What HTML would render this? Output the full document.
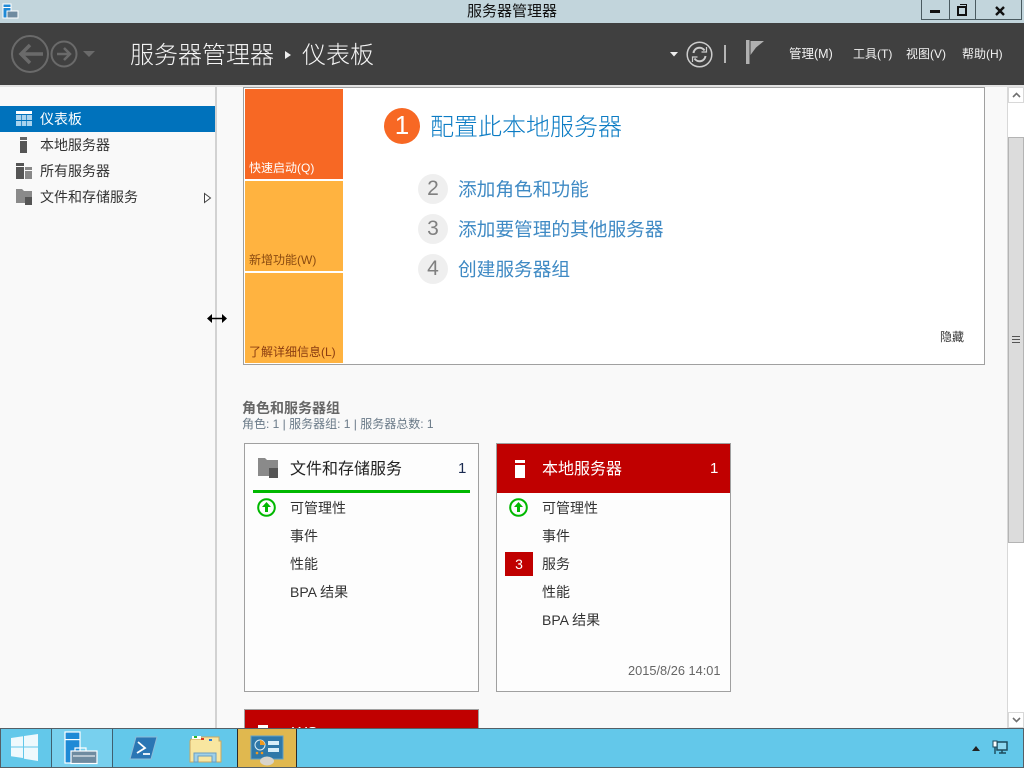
<!DOCTYPE html>
<html lang="zh"><head><meta charset="utf-8"><title>服务器管理器</title>
<style>
html,body{margin:0;padding:0;width:1024px;height:768px;overflow:hidden;background:#f9f9f9}
body{position:relative;font-family:"Liberation Sans","Noto Sans CJK SC",sans-serif;font-size:14px;color:#333}
.a,.t{position:absolute}
.t{white-space:nowrap;line-height:1}
svg{position:absolute;overflow:visible}
.c{position:absolute;background:#fdfdfd;border:1px solid #a0a0a0;box-sizing:border-box}
.num{position:absolute;width:30px;height:30px;border-radius:50%;background:#efefef;color:#808080;font-size:21px;line-height:30px;text-align:center;font-weight:300}
.lnk{color:#3f8ac4;font-size:18.7px}
.tile{position:absolute;left:245px;width:98px;height:90px}
.tile span{position:absolute;left:4px;bottom:3px;font-size:12px;line-height:16px;white-space:nowrap}
.m{font-size:12px;color:#f2f2f2;top:48px}
</style></head><body>
<!-- title bar -->
<div class="a" style="left:0;top:0;width:1024px;height:23px;background:#c2d5dc"></div>
<svg style="left:2px;top:3px" width="17" height="16" viewBox="0 0 17 16"><rect x="1" y="1" width="8" height="14" fill="#1f8ad6" stroke="#fff"/><rect x="1" y="4" width="8" height="1" fill="#fff"/><rect x="5" y="8" width="11" height="7" fill="#6f8ba0" stroke="#fff"/></svg>
<div class="t" style="left:467px;top:4px;font-size:15px;color:#111">服务器管理器</div>
<div class="a" style="left:921px;top:0;height:20px;box-sizing:border-box;border:1px solid #4a5a60;border-top:0;width:101px"></div>
<div class="a" style="left:949px;top:0;width:1px;height:19px;background:#4a5a60"></div>
<div class="a" style="left:975px;top:0;width:1px;height:19px;background:#4a5a60"></div>
<div class="a" style="left:930px;top:10px;width:10px;height:3px;background:#111"></div>
<div class="a" style="left:957px;top:6px;width:6px;height:6px;border:2px solid #111"></div>
<div class="a" style="left:960px;top:4px;width:6px;height:1px;background:#111"></div>
<div class="a" style="left:966px;top:4px;width:1px;height:7px;background:#111"></div>
<svg style="left:994px;top:5px" width="12" height="12" viewBox="0 0 12 12"><path d="M2 2L10 10M10 2L2 10" stroke="#111" stroke-width="2.4"/></svg>
<!-- header -->
<div class="a" style="left:0;top:23px;width:1024px;height:62px;background:#404040"></div>
<svg style="left:10px;top:34px" width="85" height="40" viewBox="0 0 85 40" fill="none" stroke="#6a6a6a"><circle cx="20" cy="20" r="18" stroke-width="2"/><path d="M33 20H11M20 11L11 20L20 29" stroke-width="3.5"/><circle cx="54" cy="20" r="12.5" stroke-width="2"/><path d="M47 20H60M54 14L60 20L54 26" stroke-width="2.5"/><path d="M73 17H85L79 23Z" fill="#6a6a6a" stroke="none"/></svg>
<div class="t" style="left:130px;top:44px;font-size:24px;color:#f4f4f4;font-weight:300">服务器管理器</div>
<svg style="left:285px;top:50px" width="6" height="10"><path d="M0 1L6 5L0 9Z" fill="#eee"/></svg>
<div class="t" style="left:302px;top:44px;font-size:24px;color:#f4f4f4;font-weight:300">仪表板</div>
<svg style="left:670px;top:52px" width="8" height="5"><path d="M0 0H8L4 4.5Z" fill="#eee"/></svg>
<svg style="left:686px;top:41px" width="27" height="27" viewBox="0 0 27 27" fill="none" stroke="#ccc"><circle cx="13.5" cy="13.5" r="12.3" stroke-width="1.5"/><path d="M7.5 12a6 6 0 0 1 11-2.5M19.5 15a6 6 0 0 1-11 2.5" stroke-width="2"/><path d="M20.5 6v5h-5M6.5 21v-5h5" stroke-width="1.2"/></svg>
<div class="a" style="left:724px;top:45px;width:2px;height:18px;background:#b5b5b5"></div>
<svg style="left:746px;top:40px" width="19" height="24" viewBox="0 0 19 24"><rect x="0" y="0" width="3.5" height="24" fill="#b0b0b0"/><path d="M4.5 1H18L10 7.5L4.5 15Z" fill="#b0b0b0"/></svg>
<div class="t m" style="left:789px;font-size:12.5px">管理(M)</div>
<div class="t m" style="left:853px">工具(T)</div>
<div class="t m" style="left:906px">视图(V)</div>
<div class="t m" style="left:962px">帮助(H)</div>
<!-- sidebar -->
<div class="a" style="left:0;top:85px;width:1024px;height:2px;background:#e2e2e2"></div>
<div class="a" style="left:215px;top:87px;width:2px;height:641px;background:#d2d2d2"></div>
<div class="a" style="left:0;top:106px;width:215px;height:26px;background:#0072bc"></div>
<svg style="left:16px;top:111px" width="16" height="15" viewBox="0 0 16 15"><rect width="16" height="3" fill="#fff"/><g fill="#a9d3ee"><rect y="4" width="5" height="5"/><rect x="5.7" y="4" width="4.6" height="5"/><rect x="11" y="4" width="5" height="5"/><rect y="10" width="5" height="5"/><rect x="5.7" y="10" width="4.6" height="5"/><rect x="11" y="10" width="5" height="5"/></g></svg>
<div class="t" style="left:40px;top:112px;color:#fff">仪表板</div>
<svg style="left:20px;top:137px" width="7" height="16"><rect width="7" height="3" fill="#666"/><rect y="4" width="7" height="12" fill="#555"/></svg>
<div class="t" style="left:40px;top:138px">本地服务器</div>
<svg style="left:16px;top:163px" width="16" height="16"><rect width="8" height="3" fill="#555"/><rect y="4" width="8" height="12" fill="#555"/><rect x="9" y="4" width="7" height="3" fill="#888"/><rect x="9" y="8" width="7" height="8" fill="#888"/></svg>
<div class="t" style="left:40px;top:164px">所有服务器</div>
<svg style="left:16px;top:189px" width="16" height="16"><path d="M0 0H6L8 2H16V8H9V14H0Z" fill="#8a8a8a"/><rect x="9" y="8" width="7" height="8" fill="#555"/></svg>
<div class="t" style="left:40px;top:190px">文件和存储服务</div>
<svg style="left:204px;top:193px" width="7" height="10"><path d="M.5.5L6.5 5L.5 9.5Z" fill="#fff" stroke="#444"/></svg>
<svg style="left:207px;top:313px" width="20" height="11" viewBox="0 0 20 11"><path d="M2 5.5H18" stroke="#000" stroke-width="1.5"/><path d="M0 5.5L5 1V10ZM20 5.5L15 1V10Z" fill="#000"/></svg>
<!-- quick start -->
<div class="a" style="left:243px;top:87px;width:742px;height:278px;box-sizing:border-box;background:#fff;border:1px solid #a0a0a0"></div>
<div class="tile" style="top:89px;background:#f76824;color:#fff"><span>快速启动(Q)</span></div>
<div class="tile" style="top:181px;background:#ffb340;color:#8a4a10"><span>新增功能(W)</span></div>
<div class="tile" style="top:273px;background:#ffb340;color:#8a3c10"><span>了解详细信息(L)</span></div>
<div class="a" style="left:384px;top:108px;width:36px;height:36px;border-radius:50%;background:#f76824;color:#fff;font-size:26px;line-height:35px;text-align:center;font-weight:300">1</div>
<div class="t" style="left:430px;top:116px;font-size:24px;color:#0c7cc4;font-weight:300">配置此本地服务器</div>
<div class="num" style="left:418px;top:174px">2</div>
<div class="t lnk" style="left:458px;top:181px">添加角色和功能</div>
<div class="num" style="left:418px;top:214px">3</div>
<div class="t lnk" style="left:458px;top:221px">添加要管理的其他服务器</div>
<div class="num" style="left:418px;top:254px">4</div>
<div class="t lnk" style="left:458px;top:261px">创建服务器组</div>
<div class="t" style="left:940px;top:331px;font-size:12px;color:#333">隐藏</div>
<!-- roles -->
<div class="t" style="left:242px;top:401px;font-size:14px;font-weight:bold;color:#666">角色和服务器组</div>
<div class="t" style="left:242px;top:418px;font-size:12px;color:#6a7a88">角色: 1 | 服务器组: 1 | 服务器总数: 1</div>
<!-- card 1 -->
<div class="c" style="left:244px;top:443px;width:235px;height:249px"></div>
<svg style="left:258px;top:458px" width="20" height="20"><path d="M0 0H7L9 2H20V10H11V18H0Z" fill="#8a8a8a"/><rect x="11" y="10" width="9" height="10" fill="#555"/></svg>
<div class="t" style="left:290px;top:462px;font-size:16px;color:#222">文件和存储服务</div>
<div class="t" style="left:458px;top:461px;font-size:15px;color:#1a2a50">1</div>
<div class="a" style="left:253px;top:490px;width:217px;height:3px;background:#00b800"></div>
<svg style="left:257px;top:498px" width="19" height="19" viewBox="0 0 19 19"><circle cx="9.5" cy="9.5" r="8.3" fill="none" stroke="#00b800" stroke-width="2"/><path d="M9.5 4L14 9H11V14H8V9H5Z" fill="#00b800"/></svg>
<div class="t" style="left:290px;top:501px">可管理性</div>
<div class="t" style="left:290px;top:529px">事件</div>
<div class="t" style="left:290px;top:557px">性能</div>
<div class="t" style="left:290px;top:585px">BPA 结果</div>
<!-- card 2 -->
<div class="c" style="left:496px;top:443px;width:235px;height:249px"></div>
<div class="a" style="left:497px;top:444px;width:233px;height:49px;background:#c00000"></div>
<svg style="left:515px;top:460px" width="10" height="18"><rect width="10" height="3" fill="#fff"/><rect y="5" width="10" height="13" fill="#fff"/></svg>
<div class="t" style="left:542px;top:462px;font-size:16px;color:#fff">本地服务器</div>
<div class="t" style="left:710px;top:461px;font-size:15px;color:#fff">1</div>
<svg style="left:509px;top:498px" width="19" height="19" viewBox="0 0 19 19"><circle cx="9.5" cy="9.5" r="8.3" fill="none" stroke="#00b800" stroke-width="2"/><path d="M9.5 4L14 9H11V14H8V9H5Z" fill="#00b800"/></svg>
<div class="t" style="left:542px;top:501px">可管理性</div>
<div class="t" style="left:542px;top:529px">事件</div>
<div class="a" style="left:505px;top:552px;width:28px;height:24px;background:#c00000;color:#fff;line-height:24px;text-align:center">3</div>
<div class="t" style="left:542px;top:557px">服务</div>
<div class="t" style="left:542px;top:585px">性能</div>
<div class="t" style="left:542px;top:613px">BPA 结果</div>
<div class="t" style="left:628px;top:665px;font-size:12.8px;color:#666">2015/8/26 14:01</div>
<!-- card 3 -->
<div class="a" style="left:244px;top:709px;width:235px;height:19px;box-sizing:border-box;background:#c00000;border:1px solid #a0a0a0;border-bottom:0;overflow:hidden">
<div class="a" style="left:13px;top:15px;width:10px;height:4px;background:#fff"></div>
<div class="t" style="left:47px;top:16px;font-size:16px;color:#fff">WS</div></div>
<!-- scrollbar -->
<div class="a" style="left:1007px;top:87px;width:17px;height:641px;background:#fff"></div>
<div class="a" style="left:1007px;top:87px;width:1px;height:641px;background:#d8d8d8"></div>
<div class="a" style="left:1008px;top:137px;width:16px;height:406px;box-sizing:border-box;background:#dcdcdc;border:1px solid #b4b4b4"></div>
<div class="a" style="left:1012px;top:336px;width:8px;height:8px;background:repeating-linear-gradient(#555 0 1px,transparent 1px 3px)"></div>
<div class="a" style="left:1008px;top:87px;width:16px;height:16px;box-sizing:border-box;background:#fff;border:1px solid #d8d8d8"></div>
<svg style="left:1012px;top:92px" width="9" height="6"><path d="M1 5L4.5 1.5L8 5" fill="none" stroke="#707070" stroke-width="1.6"/></svg>
<div class="a" style="left:1008px;top:712px;width:16px;height:16px;box-sizing:border-box;background:#fff;border:1px solid #d8d8d8"></div>
<svg style="left:1012px;top:717px" width="9" height="6"><path d="M1 1L4.5 4.5L8 1" fill="none" stroke="#707070" stroke-width="1.6"/></svg>
<!-- taskbar -->
<div class="a" style="left:0;top:728px;width:1024px;height:40px;box-sizing:border-box;background:#63c8ea;border:1px solid #555f66"></div>
<svg style="left:11px;top:734px" width="28" height="27" viewBox="0 0 28 27"><path d="M0 4L12 2.2V12.5H0ZM13 2L27 0V12.5H13ZM0 13.5H12V24L0 22.2ZM13 13.5H27V27L13 24.8Z" fill="#eef9fd"/></svg>
<div class="a" style="left:51px;top:729px;width:60px;height:38px;background:#78d0ee;border-left:1px solid #3f6070;border-right:1px solid #3f6070"></div>
<svg style="left:64px;top:731px" width="34" height="34" viewBox="0 0 34 34"><rect x="1" y="1" width="15" height="31" fill="#1f8ad6" stroke="#fff" stroke-width="1.2"/><rect x="1" y="8" width="15" height="1.2" fill="#fff"/><path d="M11 20V17H22V20" fill="none" stroke="#fff" stroke-width="1.2"/><rect x="7" y="20" width="26" height="12.5" fill="#6f8ba0" stroke="#fff" stroke-width="1.2"/><path d="M9 25H31" stroke="#fff"/></svg>
<svg style="left:130px;top:737px" width="27" height="23" viewBox="0 0 27 23"><path d="M6 0H27L21 22H0Z" fill="#2a76b4" stroke="#8cbcd8"/><path d="M8 5L15 11L7 16M13 17H20" fill="none" stroke="#fff" stroke-width="1.8"/></svg>
<svg style="left:189px;top:735px" width="33" height="28" viewBox="0 0 33 28"><path d="M2 4H12V2H30V6H32V27H1V6Z" fill="#f8e6a0" stroke="#caa760"/><rect x="3" y="1" width="9" height="3" fill="#fff"/><rect x="5" y="1" width="3" height="2" fill="#2ab52a"/><rect x="12" y="3" width="3" height="2" fill="#d83a20"/><rect x="20" y="4" width="3" height="2" fill="#2a7ad8"/><path d="M5 27V18H27V27H23V21H9V27Z" fill="#9fd0e8" stroke="#6a9ec0"/></svg>
<div class="a" style="left:237px;top:729px;width:60px;height:38px;box-sizing:border-box;background:#e0b84f;border:1px solid #2a2a2a;border-width:0 1px"></div>
<svg style="left:251px;top:736px" width="33" height="29" viewBox="0 0 33 29"><rect x="0" y="0" width="32" height="23" fill="#2f78a8" stroke="#5fa0c8"/><circle cx="9" cy="9" r="5" fill="none" stroke="#d8eef8"/><path d="M9 4a5 5 0 0 1 5 5H9Z" fill="#f09a20"/><rect x="17" y="5" width="11" height="4" fill="#d8eef8"/><rect x="17" y="12" width="11" height="4" fill="#d8eef8"/><circle cx="6" cy="17" r="1.3" fill="#f09a20"/><circle cx="11" cy="17" r="1.3" fill="#f09a20"/><ellipse cx="16" cy="25" rx="7" ry="4.5" fill="#d8d4cc"/></svg>
<svg style="left:972px;top:746px" width="8" height="5"><path d="M0 5L4 0L8 5Z" fill="#222"/></svg>
<svg style="left:992px;top:740px" width="16" height="15" viewBox="0 0 16 15" fill="none" stroke="#fff"><rect x="5" y="2" width="10" height="8" fill="#8fd8f0" stroke="#1c4a5c" stroke-width="1.5"/><path d="M7 13H14M10 10V13" stroke="#1c4a5c" stroke-width="1.5"/><rect x="1" y="1" width="4" height="6" fill="#fff" stroke="#1c4a5c"/><path d="M3 7V14" stroke="#1c4a5c" stroke-width="1.4"/></svg>
</body></html>
